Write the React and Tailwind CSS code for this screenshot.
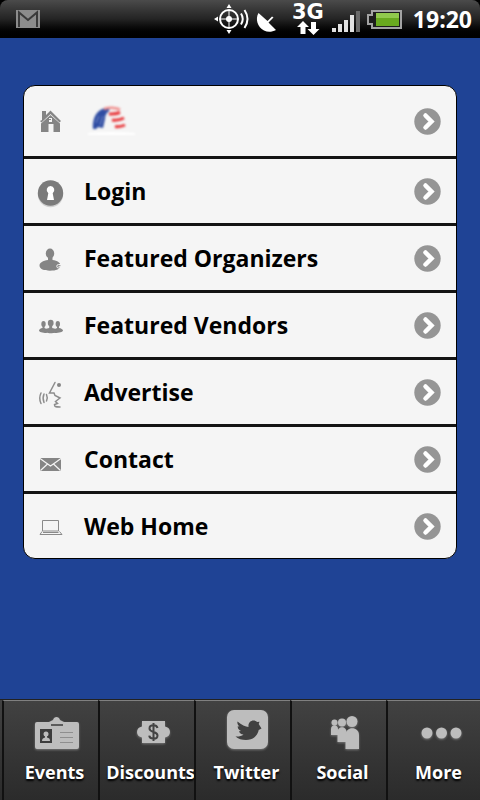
import { useState } from 'react';

const MENU = [
  { id: 'home', label: '', Icon: HomeIcon },
  { id: 'login', label: 'Login', Icon: KeyholeIcon },
  { id: 'organizers', label: 'Featured Organizers', Icon: PersonIcon },
  { id: 'vendors', label: 'Featured Vendors', Icon: GroupIcon },
  { id: 'advertise', label: 'Advertise', Icon: SpeakIcon },
  { id: 'contact', label: 'Contact', Icon: MailIcon },
  { id: 'web', label: 'Web Home', Icon: LaptopIcon },
];

const TABS = [
  { id: 'events', label: 'Events', Icon: BadgeIcon },
  { id: 'discounts', label: 'Discounts', Icon: CouponIcon },
  { id: 'twitter', label: 'Twitter', Icon: BirdIcon },
  { id: 'social', label: 'Social', Icon: SocialIcon },
  { id: 'more', label: 'More', Icon: DotsIcon },
];

function RowSvg({ children }) {
  return (
    <svg width="28" height="40" viewBox="0 0 28 40" fill="#858585" className="shrink-0" aria-hidden="true">
      {children}
    </svg>
  );
}

function HomeIcon() {
  return (
    <RowSvg>
      <path d="M5 19L5 10h4v4l4.500-4.500L24 20l-1.500 1.500L13.500 13 4.500 21.500 3 20z" />
      <path d="M4 22.500L13.500 14 23 22.500V31h-6.500v-8h-5v8H4z" />
      <path d="M12 17h3v4h-3v-2h2v-1h-2z" fill="#f5f5f5" />
    </RowSvg>
  );
}

function KeyholeIcon() {
  return (
    <RowSvg>
      <circle cx="13.500" cy="23.500" r="12.700" fill="#cfcfcf" />
      <circle cx="13.500" cy="22" r="12.700" fill="#7b7b7b" />
      <path d="M13.500 15a4 4 0 0 1 2.200 7.200L17 29h-7l1.300-6.800A4 4 0 0 1 13.500 15z" fill="#fff" />
    </RowSvg>
  );
}

function PersonIcon() {
  return (
    <RowSvg>
      <ellipse cx="13" cy="15.500" rx="4.200" ry="5" />
      <path d="M11 18h4.500v4c5 .7 8 2.600 8 5.500 0 3.500-4.500 5.200-10.500 5.200S2.500 31 2.500 27.500c0-3 3.500-4.800 8.500-5.500z" />
      <path d="M25 26.500h-3.500a1.500 1.500 0 0 0 0 3.500H25M21.500 28.300h4" fill="none" stroke="#f5f5f5" strokeWidth="1" />
    </RowSvg>
  );
}

function GroupIcon() {
  return (
    <RowSvg>
      <ellipse cx="6.500" cy="19" rx="2.200" ry="2.900" />
      <ellipse cx="20.800" cy="19" rx="2.200" ry="2.900" />
      <path d="M5.500 21h2v2l2 1v4c-4 0-7.500-1-7.500-2.500 0-1.200 1.500-2.200 3.500-2.500zM22 21h-2v2l-2 1v4c4 0 8-1 8-2.500 0-1.200-2-2.200-4-2.500z" />
      <ellipse cx="13.700" cy="18" rx="2.900" ry="3.300" />
      <path d="M12.200 20h3v3c3 .4 5 1.200 5 2.700 0 1.800-3 2.500-6.500 2.500s-6.500-.7-6.500-2.500c0-1.500 2-2.300 5-2.700z" />
    </RowSvg>
  );
}

function SpeakIcon() {
  return (
    <RowSvg>
      <g fill="none" stroke="#8d8d8d" strokeWidth="1.500" strokeLinecap="round">
        <path d="M18 10.500L12.500 21h4.500l1 2.500 5 2.500-4.500 3.500 2 2-3 1c0 2 .5 2.500 5.500 2.500" />
        <path d="M4 21q-2.500 5 0 10.500M7 22q-1.800 4 0 8.500M9.500 22.500q1.500 3.500 0 6.500" />
      </g>
      <circle cx="22" cy="13" r="2" />
    </RowSvg>
  );
}

function MailIcon() {
  return (
    <RowSvg>
      <rect x="3" y="19" width="21" height="13" rx="1" />
      <path d="M3 19.500l10.500 7.500L24 19.500M3.500 31.500l7-6.500M23.500 31.500l-7-6.500" fill="none" stroke="#f5f5f5" strokeWidth="1.200" />
    </RowSvg>
  );
}

function LaptopIcon() {
  return (
    <RowSvg>
      <g fill="none" stroke="#8a8a8a" strokeWidth="1">
        <path d="M5.500 14.500h16v10.500h-16zM5 25.500L3 28.500h22L22.500 25.500" />
        <path d="M6 26.500h15.500" />
      </g>
    </RowSvg>
  );
}

function FlagLogo() {
  return (
    <svg width="56" height="40" viewBox="0 0 56 40" role="img" aria-label="Home">
      <g style={{ filter: 'blur(0.8px)' }}>
        <path d="M9 28C8 17 13 8 22 7c3 0 4 1 3 3-3 2-4 5-4 8l-2 9-5-1-2 2z" fill="#2f4da3" />
        <path d="M12 22l3-7M16 24l3-9" stroke="#7f92c9" strokeWidth="1" />
        <path d="M20 8c6-2 11-1.500 16 .5" fill="none" stroke="#f08f8d" strokeWidth="2.500" />
        <path d="M25 13c4 0 6 .5 11-1.500M28 19c4 .5 7 .5 12-2M31 25.500c4 .5 6 .3 10-1.500" fill="none" stroke="#e8383c" strokeWidth="3" />
      </g>
      <path d="M4 32q23-2 47 0v2H4z" fill="#fff" style={{ filter: 'blur(1px)' }} />
    </svg>
  );
}

function Chevron() {
  return (
    <svg width="27" height="27" viewBox="0 0 27 27" className="shrink-0" aria-hidden="true">
      <circle cx="13.500" cy="13.500" r="13.200" fill="#959595" />
      <path d="M11.500 7.500l6 6-6 6" fill="none" stroke="#fff" strokeWidth="4.500" strokeLinecap="round" />
    </svg>
  );
}

function TabSvg({ children }) {
  return (
    <svg width="50" height="48" viewBox="0 0 50 48" fill="#bdbdbd" className="drop-shadow-[0_1px_1px_#777]" aria-hidden="true">
      {children}
    </svg>
  );
}

function BadgeIcon() {
  return (
    <TabSvg>
      <path d="M7 16h12l4-2c1-4 6-4 7 0l4 2h13a2 2 0 0 1 2 2v23a2 2 0 0 1-2 2H7a2 2 0 0 1-2-2V18a2 2 0 0 1 2-2z" />
      <path d="M21 19h12" stroke="#3c3c3c" strokeWidth="1.500" />
      <rect x="10" y="23" width="12" height="14" fill="#3c3c3c" />
      <circle cx="16" cy="28" r="2.500" />
      <path d="M12 35c0-2.500 1.500-3 3-3.500V30h2v1.500c2 .5 3 1 3 3.500z" />
      <path d="M30 26.500h13M30 31.500h13M30 36.500h13" stroke="#8e8e8e" />
    </TabSvg>
  );
}

function CouponIcon() {
  return (
    <TabSvg>
      <path d="M16 15h23v5.500c3 .5 5 2.500 5 5.500s-2 5-5 5.500V37H16v-5.500c-3-.5-5-2.500-5-5.500s2-5 5-5.500z" />
      <path d="M31.500 22c-.5-2-2-2.700-4-2.700-2.500 0-4 1.200-4 3.200 0 4.500 8 2.500 8 7 0 2-1.500 3.200-4 3.200s-4-1-4.300-3M27.500 17v18" fill="none" stroke="#444" strokeWidth="2" />
    </TabSvg>
  );
}

function BirdIcon() {
  return (
    <TabSvg>
      <rect x="5" y="4" width="41" height="39" rx="7" />
      <path
        d="M15.500 15.500c4 3.500 8 5 11 5.500-.5-4 2-6.500 5-6.500 1.500 0 2.500.5 3.500 1.500l2.500-.3-.8 2.300 2.800 4.500-2.800 1.500C35.500 30 31 34 24 34c-4 0-8-1-10.500-3.500 3 .3 6-.3 8-2-2.500-.2-4-1.500-4.500-3.300l2-.2c-2.500-1-3.300-2.700-3.300-4.700l1.700.2c-1.800-1.500-2.300-3.300-1.900-5z"
        fill="#404040"
      />
    </TabSvg>
  );
}

function SocialIcon() {
  return (
    <TabSvg>
      <circle cx="16.500" cy="16.500" r="3" />
      <path d="M13 29v-6c0-5 7-5 7 0v6z" />
      <circle cx="24" cy="16.500" r="4" />
      <path d="M19.500 36V26c0-6.500 9-6.500 9 0v10z" />
      <circle cx="34" cy="15.500" r="5.500" />
      <path d="M27.500 43V29c0-9 13.500-9 13.500 0v14z" />
    </TabSvg>
  );
}

function DotsIcon() {
  return (
    <TabSvg>
      <circle cx="13" cy="27" r="5.500" />
      <circle cx="27.500" cy="27" r="5.500" />
      <circle cx="42" cy="27" r="5.500" />
    </TabSvg>
  );
}

function StatusBar() {
  return (
    <header className="bg-black text-white">
      <div className="flex h-[38px] items-center rounded-t-lg bg-linear-to-b from-[#4b4b4b] via-[#242424] to-black pr-2 pl-4">
        <svg width="24" height="18" viewBox="0 0 24 18" aria-label="Mail">
          <rect width="24" height="18" fill="#8c8c8c" />
          <path d="M3 17V2.500l9 7.500 9-7.500V17" fill="none" stroke="#3a3a3a" strokeWidth="2" />
        </svg>

        <div className="ml-auto flex items-center">
          <svg width="39" height="38" viewBox="0 0 39 38" fill="#fff" aria-label="GPS">
            <circle cx="16" cy="19" r="9" fill="none" stroke="#fff" strokeWidth="2" />
            <path d="M16 10v18M7 19h18" stroke="#fff" strokeWidth="1" />
            <circle cx="16" cy="19" r="3" />
            <path d="M16 4l2.500 4h-5zM16 34l2.500-4h-5zM1 19l4-2.500v5z" />
            <path d="M28 13.500q3.500 5.500 0 11M31.500 10q6 9 0 18" fill="none" stroke="#fff" strokeWidth="2" />
          </svg>
          <svg width="38" height="38" viewBox="0 0 38 38" fill="#fff" aria-label="Satellite">
            <path d="M6.500 13c-3.500 6-1 14 5.500 17.500 4 2 8 1.500 12-.5l-7.500-7.500 5-5-1.500-1-4.500 4.500z" />
          </svg>
          <div className="flex w-9 flex-col items-center">
            <span className="font-['DejaVu_Sans'] text-[21px] leading-[18px] font-bold">3G</span>
            <svg width="24" height="14" viewBox="0 0 24 14" fill="#fff" aria-hidden="true">
              <path d="M7 0l6 6H9.500v7h-5V6H1zM17.500 14l-6-6H15V1h5v7h3.500z" />
            </svg>
          </div>
          <svg width="36" height="38" viewBox="0 0 36 38" fill="#e2e2e2" aria-label="Signal">
            <path d="M6 28h4v4H6zM12 24h4v8h-4zM18 20h4v12h-4zM24 15h4v17h-4z" />
            <path d="M30 11h4v21h-4z" fill="#6a6a6a" />
          </svg>
          <svg width="51" height="38" viewBox="0 0 51 38" aria-label="Battery">
            <path d="M10 11h29v17H10v-4H6v-9h4z" fill="#1c1c1c" stroke="#a3a3a3" strokeWidth="2" />
            <path d="M14 13h23v13H14z" fill="#69a91f" />
            <path d="M14 13h23v5H14z" fill="#91c94d" />
          </svg>
          <span className="text-[23px] leading-8 font-bold">19:20</span>
        </div>
      </div>
    </header>
  );
}

export default function App() {
  const [active, setActive] = useState(null);

  return (
    <div className="flex min-h-screen flex-col bg-[#1f4395] font-['Open_Sans',sans-serif]">
      <StatusBar />

      <main className="flex-1 px-[23px] pt-[47px] pb-10">
        <ul className="divide-y-3 divide-[#141414] overflow-hidden rounded-xl border border-black bg-[#f5f5f5]">
          {MENU.map(({ id, label, Icon }) => (
            <li key={id}>
              <button
                type="button"
                onClick={() => setActive(id)}
                className={`flex w-full items-center gap-[19px] pr-[15px] pl-[13px] text-left ${label ? 'h-16' : 'h-[70px]'}`}
              >
                <Icon />
                <span className="flex-1 text-[23px] leading-8 font-bold text-black">{label || <FlagLogo />}</span>
                <Chevron />
              </button>
            </li>
          ))}
        </ul>
      </main>

      <nav className="overflow-hidden border-t border-[#222] bg-linear-to-b from-[#424242] to-[#2b2b2b] pl-0.5">
        <div className="-mr-0.5 grid grid-cols-5">
          {TABS.map(({ id, label, Icon }) => (
            <button
              key={id}
              type="button"
              aria-pressed={active === id}
              onClick={() => setActive(id)}
              className="flex h-[100px] flex-col items-center border-t border-l-2 border-t-[#808080] border-l-[#111] pt-[5px] pl-[7px]"
            >
              <Icon />
              <span className="text-lg leading-9 font-bold whitespace-nowrap text-white [text-shadow:0_2px_2px_#000]">
                {label}
              </span>
            </button>
          ))}
        </div>
      </nav>
    </div>
  );
}
